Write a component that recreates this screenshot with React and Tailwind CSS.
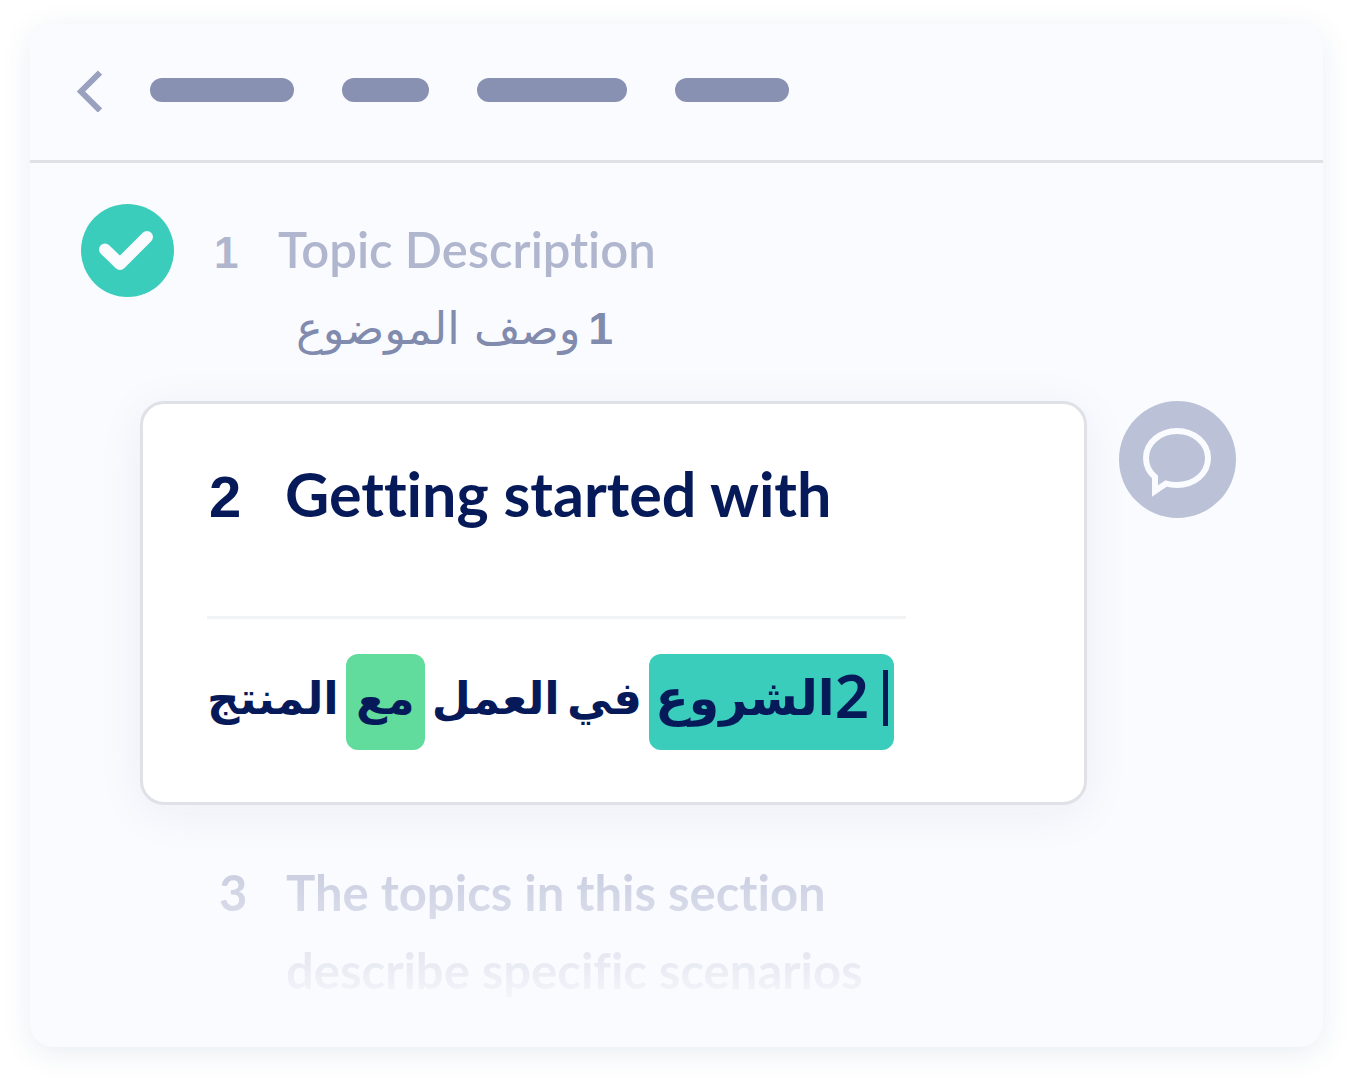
const navBars = ["w-36", "w-[87px]", "w-[150px]", "w-[114px]"];

function BackIcon() {
  return (
    <svg width="26" height="44" viewBox="0 0 26 44" fill="none" aria-hidden="true">
      <path d="M24 4.500 L5 23.500 L24 42.500" stroke="#99a1bf" strokeWidth="6" />
    </svg>
  );
}

function CheckIcon() {
  return (
    <svg className="size-[93px] shrink-0" viewBox="0 0 93 93" role="img" aria-label="Translated">
      <circle cx="46.5" cy="46.5" r="46.5" fill="#3acdbc" />
      <path d="M24 45.5 L39 60 L66 33" fill="none" stroke="#fafbff" strokeWidth="12" strokeLinecap="round" strokeLinejoin="round" />
    </svg>
  );
}

function CommentIcon() {
  return (
    <svg width="117" height="117" viewBox="0 0 117 117" fill="none" aria-hidden="true">
      <path
        d="M36 76 C30 71 27 64 27 57 C27 42 41 30 58 30 C75 30 89 42 89 57 C89 73 75 84 58 84 C54 84 50 83.500 47 82.500 L36 90 Z"
        stroke="#fafbff"
        strokeWidth="6"
      />
    </svg>
  );
}

export default function App() {
  return (
    <div className="bg-white px-[30px] pt-6 pb-9 font-['Lato',sans-serif] [font-variant-ligatures:no-common-ligatures]">
      <main className="rounded-3xl bg-[#fafbff] pb-[38px] shadow-[0_6px_30px_rgba(30,80,120,0.1)]">
        <header className="flex h-[139px] items-center border-b-[3px] border-[#dfe1e7] pb-1 pl-[46px]">
          <button type="button" aria-label="Back">
            <BackIcon />
          </button>
          <nav aria-label="Sections" className="ml-12 flex gap-12">
            {navBars.map((width) => (
              <span key={width} className={`h-6 rounded-full bg-[#8891b2] ${width}`} />
            ))}
          </nav>
        </header>

        <section className="flex items-start pt-[41px] pl-[51px]">
          <CheckIcon />
          <h2 className="ml-10 flex h-[93px] items-baseline text-[49px] leading-[90px] font-bold text-[#b0b6ce]">
            <span className="w-16 text-[44px] leading-none font-['Liberation_Sans',sans-serif]">1</span>
            <span className="font-semibold">Topic Description</span>
          </h2>
        </section>
        <p
          dir="rtl"
          lang="ar"
          className="ml-[250px] flex h-[72px] w-[333px] items-baseline gap-2 text-[45px] leading-[64px] whitespace-nowrap text-[#818bae] font-['DejaVu_Sans',sans-serif]"
        >
          <span className="text-[44px] leading-none font-bold font-['Liberation_Sans',sans-serif]">1</span>
          <span>وصف الموضوع</span>
        </p>

        <div className="mt-8 flex items-start gap-8 pl-[110px]">
          <section className="w-[947px] rounded-3xl border-[3px] border-[#dfe1e7] bg-white px-16 pt-[54px] pb-[52px] text-[#061a5a] shadow-[0_8px_50px_rgba(6,26,90,0.06)]">
            <h2 className="flex h-[72px] items-baseline pl-0.5 text-[61px] leading-[72px] font-bold">
              <span className="w-[76px] text-[58px] leading-none font-['Liberation_Sans',sans-serif]">2</span>
              <span>Getting started with</span>
            </h2>
            <div className="mt-[86px] w-[699px] border-t-[3px] border-[#f1f3f5] pt-[35px] pr-3">
              <p
                dir="rtl"
                lang="ar"
                className="flex justify-between text-[45px] leading-[90px] font-bold whitespace-nowrap font-['DejaVu_Sans',sans-serif]"
              >
                <mark className="flex h-24 rounded-xl bg-[#3acdbc] px-1.5 text-inherit">
                  <span className="mt-4 ml-3.5 h-14 w-[5px] bg-[#061a5a]" />
                  <span className="text-6xl leading-[82px] font-semibold font-['Noto_Sans',sans-serif]">2</span>
                  <span className="text-[49px]">الشروع</span>
                </mark>
                <span>في</span>
                <span>العمل</span>
                <mark className="h-24 rounded-xl bg-[#61dc9d] px-2.5 text-inherit">مع</mark>
                <span>المنتج</span>
              </p>
            </div>
          </section>
          <button type="button" aria-label="Comment" className="rounded-full bg-[#bbc1d6]">
            <CommentIcon />
          </button>
        </div>

        <section className="mt-12 flex bg-linear-to-b from-[#c4c9dd] to-[#f8f9fd] bg-clip-text pl-[189px] text-[49px] leading-[78px] font-bold text-transparent">
          <span className="w-[67px]">3</span>
          <p className="max-w-[640px]">The topics in this section describe specific scenarios</p>
        </section>
      </main>
    </div>
  );
}
